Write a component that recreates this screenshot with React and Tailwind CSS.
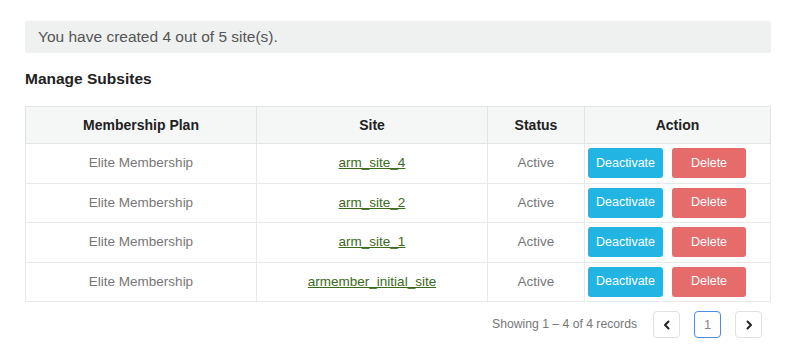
import React from 'react';

const rows = [
  { plan: 'Elite Membership', site: 'arm_site_4', status: 'Active' },
  { plan: 'Elite Membership', site: 'arm_site_2', status: 'Active' },
  { plan: 'Elite Membership', site: 'arm_site_1', status: 'Active' },
  { plan: 'Elite Membership', site: 'armember_initial_site', status: 'Active' },
];

const Chevron = ({ dir }) => (
  <svg width="10" height="10" viewBox="0 0 10 10" fill="none" stroke="#222" strokeWidth="2" strokeLinecap="round" strokeLinejoin="round">
    {dir === 'left' ? <path d="M6.5 1.5 3 5l3.5 3.5" /> : <path d="M3.5 1.5 7 5 3.5 8.5" />}
  </svg>
);

const App = () => {
  return (
    <div className="w-[812px] h-[358px] bg-white pt-[21px] pl-[25px] font-['Liberation_Sans',Arial,sans-serif]">
      {/* Info box */}
      <div className="w-[746px] h-[32px] bg-[#eff0f0] rounded-[2px] flex items-center pl-[13px] text-[15.5px] text-[#555]">
        You have created 4 out of 5 site(s).
      </div>

      <h2 className="mt-[17px] text-[15.5px] font-bold text-[#222] leading-[18px]">Manage Subsites</h2>

      {/* Table */}
      <table className="mt-[18px] w-[746px] border-collapse border border-[#e2e4e4] text-[13.5px]">
        <thead>
          <tr className="h-[37px] bg-[#f5f6f6] text-[14px]">
            <th className="w-[231px] border border-[#e2e4e4] font-bold text-[#222]">Membership Plan</th>
            <th className="w-[231px] border border-[#e2e4e4] font-bold text-[#222]">Site</th>
            <th className="w-[97px] border border-[#e2e4e4] font-bold text-[#222]">Status</th>
            <th className="border border-[#e2e4e4] font-bold text-[#222]">Action</th>
          </tr>
        </thead>
        <tbody>
          {rows.map((r) => (
            <tr key={r.site} className="h-[39.5px]">
              <td className="border border-[#e8eaea] text-center text-[#777]">{r.plan}</td>
              <td className="border border-[#e8eaea] text-center">
                <a href="#" className="text-[#3b6a1c] underline">{r.site}</a>
              </td>
              <td className="border border-[#e8eaea] text-center text-[#777]">{r.status}</td>
              <td className="border border-[#e8eaea] pl-[3px]">
                <div className="flex gap-[9px]">
                  <button className="w-[75px] h-[30px] rounded-[3px] bg-[#22b5e3] text-white text-[12.5px]">Deactivate</button>
                  <button className="w-[74px] h-[30px] rounded-[3px] bg-[#e66b6b] text-white text-[12.5px]">Delete</button>
                </div>
              </td>
            </tr>
          ))}
        </tbody>
      </table>

      {/* Pagination */}
      <div className="w-[737px] mt-[9px] flex items-center justify-end gap-[14px]">
        <span className="text-[12.2px] text-[#777] mr-[2px]">Showing 1 – 4 of 4 records</span>
        <button className="w-[27px] h-[27px] rounded-[4px] border border-[#dfe1e3] flex items-center justify-center">
          <Chevron dir="left" />
        </button>
        <button className="w-[27px] h-[27px] rounded-[4px] border border-[#4b8de0] flex items-center justify-center text-[13px] text-[#888]">1</button>
        <button className="w-[27px] h-[27px] rounded-[4px] border border-[#dfe1e3] flex items-center justify-center">
          <Chevron dir="right" />
        </button>
      </div>
    </div>
  );
};

export default App;
